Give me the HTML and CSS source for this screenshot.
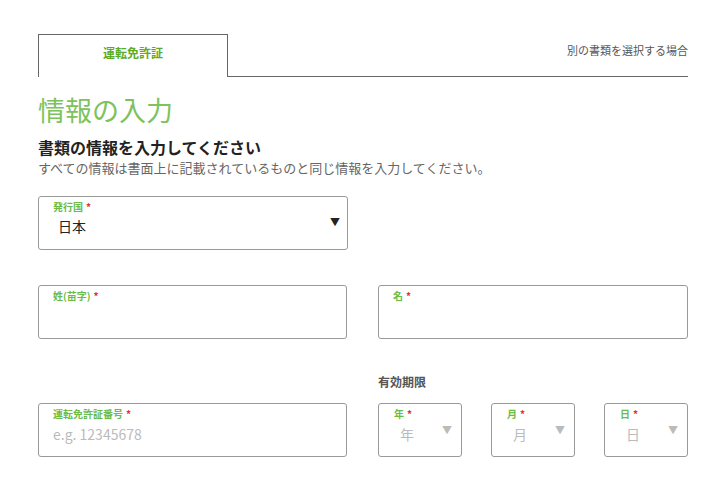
FILE: index.html
```html
<!DOCTYPE html>
<html lang="ja">
<head>
  <meta charset="UTF-8">
  <meta name="viewport" content="width=device-width, initial-scale=1.0">
  <title>情報の入力</title>
  <link rel="stylesheet" href="styles.css">
</head>
<body>
  <div class="page">
    <div class="doc-tabs">
      <div class="doc-tab">運転免許証</div>
      <div class="doc-other">別の書類を選択する場合</div>
    </div>

    <h1 class="page-title">情報の入力</h1>
    <h2 class="sub-title">書類の情報を入力してください</h2>
    <p class="note">すべての情報は書面上に記載されているものと同じ情報を入力してください。</p>

    <!-- 発行国 -->
    <div class="row">
      <div class="field select-field">
        <label class="field-label">発行国<span class="req">*</span></label>
        <div class="field-value">日本</div>
        <span class="arrow">&#9660;</span>
      </div>
    </div>

    <!-- 氏名 -->
    <div class="row two-col">
      <div class="field">
        <label class="field-label">姓(苗字)<span class="req">*</span></label>
      </div>
      <div class="field wide">
        <label class="field-label">名<span class="req">*</span></label>
      </div>
    </div>

    <!-- 免許番号・有効期限 -->
    <div class="row two-col bottom-row">
      <div class="field">
        <label class="field-label">運転免許証番号<span class="req">*</span></label>
        <div class="field-value placeholder">e.g. 12345678</div>
      </div>
      <div class="expiry">
        <div class="expiry-title">有効期限</div>
        <div class="date-row">
          <div class="field date-field">
            <label class="field-label">年<span class="req">*</span></label>
            <div class="field-value placeholder">年</div>
            <span class="arrow light">&#9660;</span>
          </div>
          <div class="field date-field">
            <label class="field-label">月<span class="req">*</span></label>
            <div class="field-value placeholder">月</div>
            <span class="arrow light">&#9660;</span>
          </div>
          <div class="field date-field">
            <label class="field-label">日<span class="req">*</span></label>
            <div class="field-value placeholder">日</div>
            <span class="arrow light">&#9660;</span>
          </div>
        </div>
      </div>
    </div>
  </div>
</body>
</html>
```

FILE: styles.css
```css
* {
  box-sizing: border-box;
  margin: 0;
  padding: 0;
}
body {
  font-family: "Noto Sans CJK JP", "Noto Sans", sans-serif;
  background: #fff;
  color: #222;
}
.page {
  width: 650px;
  margin-left: 38px;
  padding-top: 34px;
}

/* タブ */
.doc-tabs {
  display: flex;
  height: 43px;
}
.doc-tab {
  width: 190px;
  border: 1px solid #666;
  border-bottom: none;
  color: #5cab22;
  font-weight: bold;
  font-size: 12px;
  text-align: center;
  padding-top: 9px;
}
.doc-other {
  flex: 1;
  border-bottom: 1px solid #666;
  text-align: right;
  font-size: 11px;
  color: #555;
  padding-top: 8px;
}

.page-title {
  font-size: 27px;
  font-weight: normal;
  color: #7cc25d;
  margin-top: 15px;
  line-height: 36px;
}
.sub-title {
  font-size: 16px;
  font-weight: bold;
  color: #222;
  margin-top: 8px;
  line-height: 22px;
}
.note {
  font-size: 13px;
  color: #666;
  line-height: 17px;
  margin-top: 1px;
}

/* 入力欄 */
.row {
  display: flex;
  margin-top: 20px;
}
.two-col {
  gap: 31px;
  margin-top: 35px;
}
.bottom-row {
  margin-top: 34px;
  align-items: flex-end;
}
.field {
  position: relative;
  width: 310px;
  height: 54px;
  border: 1px solid #999;
  border-radius: 3px;
  padding: 3px 14px 0;
}
.field.wide {
  width: 311px;
}
.field-label {
  display: block;
  font-size: 10px;
  font-weight: bold;
  color: #6bbb45;
  line-height: 14px;
}
.req {
  color: #e0302c;
  margin-left: 3px;
}
.field-value {
  font-size: 14px;
  line-height: 20px;
  margin-top: 2px;
  padding-left: 5px;
}
.placeholder {
  color: #bbb;
  padding-left: 0;
  margin-top: 3px;
}
.arrow {
  position: absolute;
  right: 7px;
  top: 17px;
  font-size: 10px;
  color: #222;
}
.arrow.light {
  color: #bbb;
  right: 9px;
  top: 18px;
}

/* 有効期限 */
.expiry {
  width: 311px;
}
.expiry-title {
  font-size: 12px;
  font-weight: bold;
  color: #555;
  margin-bottom: 13px;
}
.date-row {
  display: flex;
  justify-content: space-between;
}
.date-field {
  width: 84px;
  padding-left: 15px;
}
.date-field .placeholder {
  padding-left: 6px;
}
```
